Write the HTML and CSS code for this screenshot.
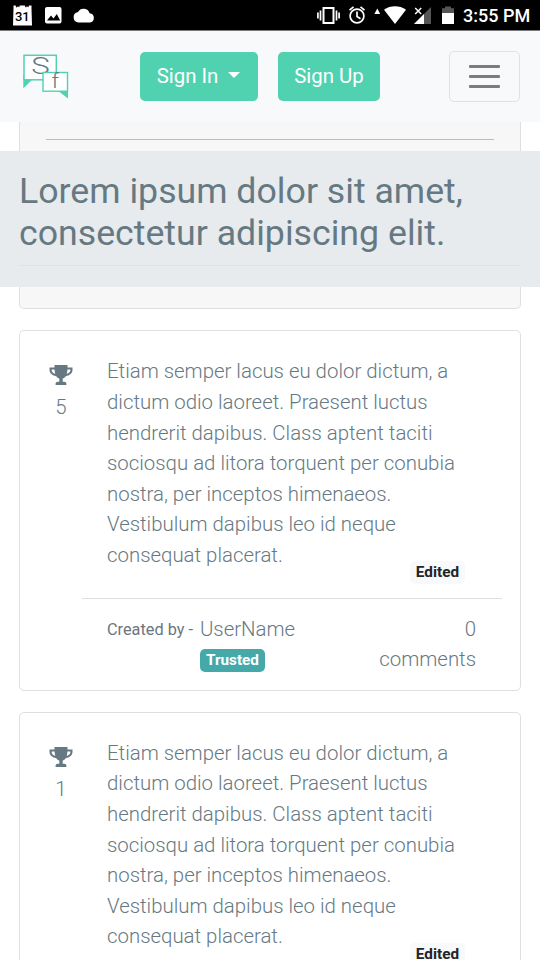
FILE: index.html
```html
<!DOCTYPE html>
<html lang="en">
<head>
<meta charset="utf-8">
<title>Forum</title>
<link rel="stylesheet" href="styles.css">
</head>
<body>
<div class="status">
  <svg class="status-left" width="100" height="30" viewBox="0 0 100 30" fill="#fff">
    <path d="M13.500 5.500h2.200c0 3 4 3 4 0h5.200c0 3 4 3 4 0h2.600v3l.5 17h-19l.5-17z"/>
    <circle cx="18" cy="7.400" r="1" /><circle cx="27" cy="7.400" r="1"/>
    <text class="cal" x="22.300" y="21" text-anchor="middle">31</text>
    <rect x="45" y="7" width="16.500" height="16.500" rx="2"/>
    <path fill="#000" d="M47 20.500l4-5 2.500 3 3.300-4.500 3.400 6.500z"/>
    <path d="M78.500 22.500a5.300 5.300 0 0 1-.5-10.500a6.300 6.300 0 0 1 11.600 1.200a4.700 4.700 0 0 1 .4 9.300z"/>
  </svg>
  <svg class="status-right" width="148" height="30" viewBox="310 0 148 30" fill="#fff">
    <g fill="none" stroke="#fff" stroke-width="1.700">
      <rect x="323.500" y="8" width="10" height="15" stroke-width="2"/>
      <path d="M320.500 10.500v10M317.900 12.500v6M336.500 10.500v10M339.100 12.500v6"/>
      <circle cx="357" cy="16" r="6.900"/>
      <path d="M349.500 10.200l4-3.400M364.500 10.200l-4-3.400M357 11.500v5l3.500 2.300"/>
    </g>
    <path d="M374.400 14l2.900-5.500 2.900 5.500z"/>
    <path d="M384 9.800c6.500-4.600 15.500-4.600 22 0l-11 14.200z"/>
    <path fill="#555" d="M431 7v17h-17z"/>
    <path d="M424 14v10h-10z"/>
    <path d="M415.200 8l6 6M421.200 8l-6 6" stroke="#fff" stroke-width="1.500"/>
    <path fill="#555" d="M442 8.300h3V6.500h6v1.800h3v5h-12z"/>
    <path d="M442 13h12v11h-12z"/>
  </svg>
  <span class="time">3:55 PM</span>
</div>
<nav class="navbar">
  <svg class="logo" width="48" height="48" viewBox="0 0 48 48">
    <path fill="#50d2b1" d="M3.300 24v13.500l11-11zM37 39l11 8.500V36z"/>
    <rect x="4" y="4.300" width="32.300" height="24.500" fill="#fff" stroke="#50d2b1" stroke-width="1.500"/>
    <text class="logo-s" transform="translate(20.400 22.700) scale(1.300 1)" text-anchor="middle">S</text>
    <rect x="23" y="21.500" width="24.500" height="18.700" fill="#fff" stroke="#50d2b1" stroke-width="1.400"/>
    <text class="logo-f" transform="translate(35.200 37) scale(1.150 1)" text-anchor="middle">f</text>
  </svg>
  <button class="btn signin">Sign In<span class="caret"></span></button>
  <button class="btn signup">Sign Up</button>
  <button class="toggler" aria-label="Menu"><span></span><span></span><span></span></button>
</nav>
<div class="strip top"><hr></div>
<header class="band"><h1>Lorem ipsum dolor sit amet, consectetur adipiscing elit.</h1></header>
<div class="strip bottom"></div>
<article class="card">
  <div class="votes">
    <svg class="trophy" width="24" height="21" viewBox="0 0 24 21"><path fill="#667982" fill-rule="evenodd" d="M5.500 0h13v2.600H23.500v2.500c0 3-3 5.700-6.700 6.100c-.9 1.300-1.900 2-3.100 2.400v3.200h1.500c1.400 0 2.200.8 2.200 2v1.300H6.600v-1.300c0-1.200.8-2 2.200-2h1.500v-3.200c-1.200-.4-2.200-1.100-3.100-2.400C3.500 10.800.5 8.100.5 5.100V2.600h5zM2.600 4.600v.7c0 1.500 1.600 3 3.700 3.600a16 16 0 0 1-.7-4.300zM21.400 4.600h-3a16 16 0 0 1-.7 4.300c2.100-.6 3.700-2.100 3.700-3.600z"/></svg>
    <span>5</span>
  </div>
  <div class="content">
    <p>Etiam semper lacus eu dolor dictum, a dictum odio laoreet. Praesent luctus hendrerit dapibus. Class aptent taciti sociosqu ad litora torquent per conubia nostra, per inceptos himenaeos. Vestibulum dapibus leo id neque consequat placerat.</p>
    <div class="edited"><span class="badge light">Edited</span></div>
    <footer class="meta">
      <span class="by">Created by -</span>
      <div class="user">UserName<span class="badge trusted">Trusted</span></div>
      <div class="comments">0 comments</div>
    </footer>
  </div>
</article>
<article class="card">
  <div class="votes">
    <svg class="trophy" width="24" height="21" viewBox="0 0 24 21"><path fill="#667982" fill-rule="evenodd" d="M5.500 0h13v2.600H23.500v2.500c0 3-3 5.700-6.700 6.100c-.9 1.300-1.900 2-3.100 2.400v3.200h1.500c1.400 0 2.200.8 2.200 2v1.300H6.600v-1.300c0-1.200.8-2 2.200-2h1.500v-3.200c-1.200-.4-2.200-1.100-3.100-2.400C3.500 10.800.5 8.100.5 5.100V2.600h5zM2.600 4.600v.7c0 1.500 1.600 3 3.700 3.600a16 16 0 0 1-.7-4.300zM21.400 4.600h-3a16 16 0 0 1-.7 4.300c2.100-.6 3.700-2.100 3.700-3.600z"/></svg>
    <span>1</span>
  </div>
  <div class="content">
    <p>Etiam semper lacus eu dolor dictum, a dictum odio laoreet. Praesent luctus hendrerit dapibus. Class aptent taciti sociosqu ad litora torquent per conubia nostra, per inceptos himenaeos. Vestibulum dapibus leo id neque consequat placerat.</p>
    <div class="edited"><span class="badge light">Edited</span></div>
  </div>
</article>
</body>
</html>
```
FILE: styles.css
```css
* { box-sizing: border-box; }
html, body { height: 960px; overflow: hidden; }
body {
  margin: 0;
  background: #fff;
  color: #667982;
  font: 300 20.4px/30.6px Roboto, sans-serif;
}
.status {
  height: 31px;
  background: #000;
  border-bottom: 1px solid #7b7b7f;
  display: flex;
  align-items: flex-start;
}
.status svg { flex: none; }
.status-right { margin-left: 210px; }
.cal { font: 500 13px Roboto, sans-serif; fill: #000; }
.time {
  margin-left: 5px;
  color: #fff;
  font-size: 18px;
  font-weight: 500;
  line-height: 32px;
  white-space: nowrap;
}
.navbar {
  height: 91px;
  background: #f8f9fb;
  padding: 20px 20px 0 20px;
  display: flex;
  align-items: flex-start;
}
.logo { overflow: visible; flex: none; }
.logo-s { font: 300 24px Roboto, sans-serif; fill: #667982; }
.logo-f { font: 300 20px Roboto, sans-serif; fill: #667982; }
.btn {
  height: 49px;
  margin-top: 1px;
  padding: 0 0 1px;
  border: 0;
  border-radius: 5px;
  background: #50d2b1;
  color: #fff;
  font: 400 20.4px/48px Roboto, sans-serif;
  display: flex;
  align-items: center;
  justify-content: center;
}
.signin { width: 118px; margin-left: 72px; padding-right: 1px; }
.signup { width: 102px; margin-left: 20px; }
.caret {
  margin: -3px 0 0 10px;
  border: 6.500px solid transparent;
  border-top: 6.500px solid #fff;
  border-bottom: 0;
}
.toggler {
  width: 71px;
  height: 51px;
  margin-left: auto;
  padding: 0;
  border: 1px solid #e0e1e3;
  border-radius: 5px;
  background: transparent;
  display: flex;
  flex-direction: column;
  align-items: center;
  justify-content: center;
  gap: 7.700px;
}
.toggler span { width: 31px; height: 2.500px; border-radius: 1px; background: #7d7b7b; }
.strip {
  margin: 0 19px 0 19px;
  border: solid #dfdfdf;
  border-width: 0 1px;
  background: #f7f7f7;
}
.strip.top { height: 29px; padding: 17px 26px 0; }
.strip hr { margin: 0; border: 0; height: 1px; background: #bcbcbc; }
.strip.bottom { height: 22.400px; border-bottom-width: 1px; border-radius: 0 0 5px 5px; }
.band { height: 136px; padding: 19.400px 19px 0 19px; background: #e7ebee; }
h1 {
  height: 95.600px;
  margin: 0;
  border-bottom: 1px solid #dde2e5;
  font-size: 35.7px;
  line-height: 42px;
  font-weight: 400;
}
.card {
  height: 360.400px;
  margin: 21px 19px 0 19px;
  border: 1px solid #dfdfdf;
  border-radius: 5px;
  display: flex;
}
.votes {
  width: 82px;
  padding-top: 34px;
  display: flex;
  flex-direction: column;
  align-items: center;
}
.trophy { margin-bottom: 6px; }
.content { width: 394px; padding: 25px 0 0 5px; }
.content p { margin: 0; width: 360px; }
.edited { height: 27px; padding-right: 31px; display: flex; justify-content: flex-end; }
.badge {
  height: 23px;
  padding: 0 6px;
  border-radius: 5px;
  font-size: 15.3px;
  line-height: 22px;
  font-weight: 700;
}
.light { margin-top: -9.400px; background: #f8f9fa; color: #212529; }
.meta {
  width: 420px;
  margin-left: -25px;
  padding: 15px 26px 0 25px;
  border-top: 1px solid #dfdfdf;
  display: flex;
  align-items: flex-start;
}
.by { font-size: 16.3px; font-weight: 400; line-height: 32px; white-space: nowrap; color: #6c757d; }
.user { margin-left: 7px; display: flex; flex-direction: column; align-items: flex-start; }
.trusted { margin-top: 4.600px; background: #45a9aa; color: #fff; }
.comments { width: 98px; margin-left: auto; text-align: right; }
```
